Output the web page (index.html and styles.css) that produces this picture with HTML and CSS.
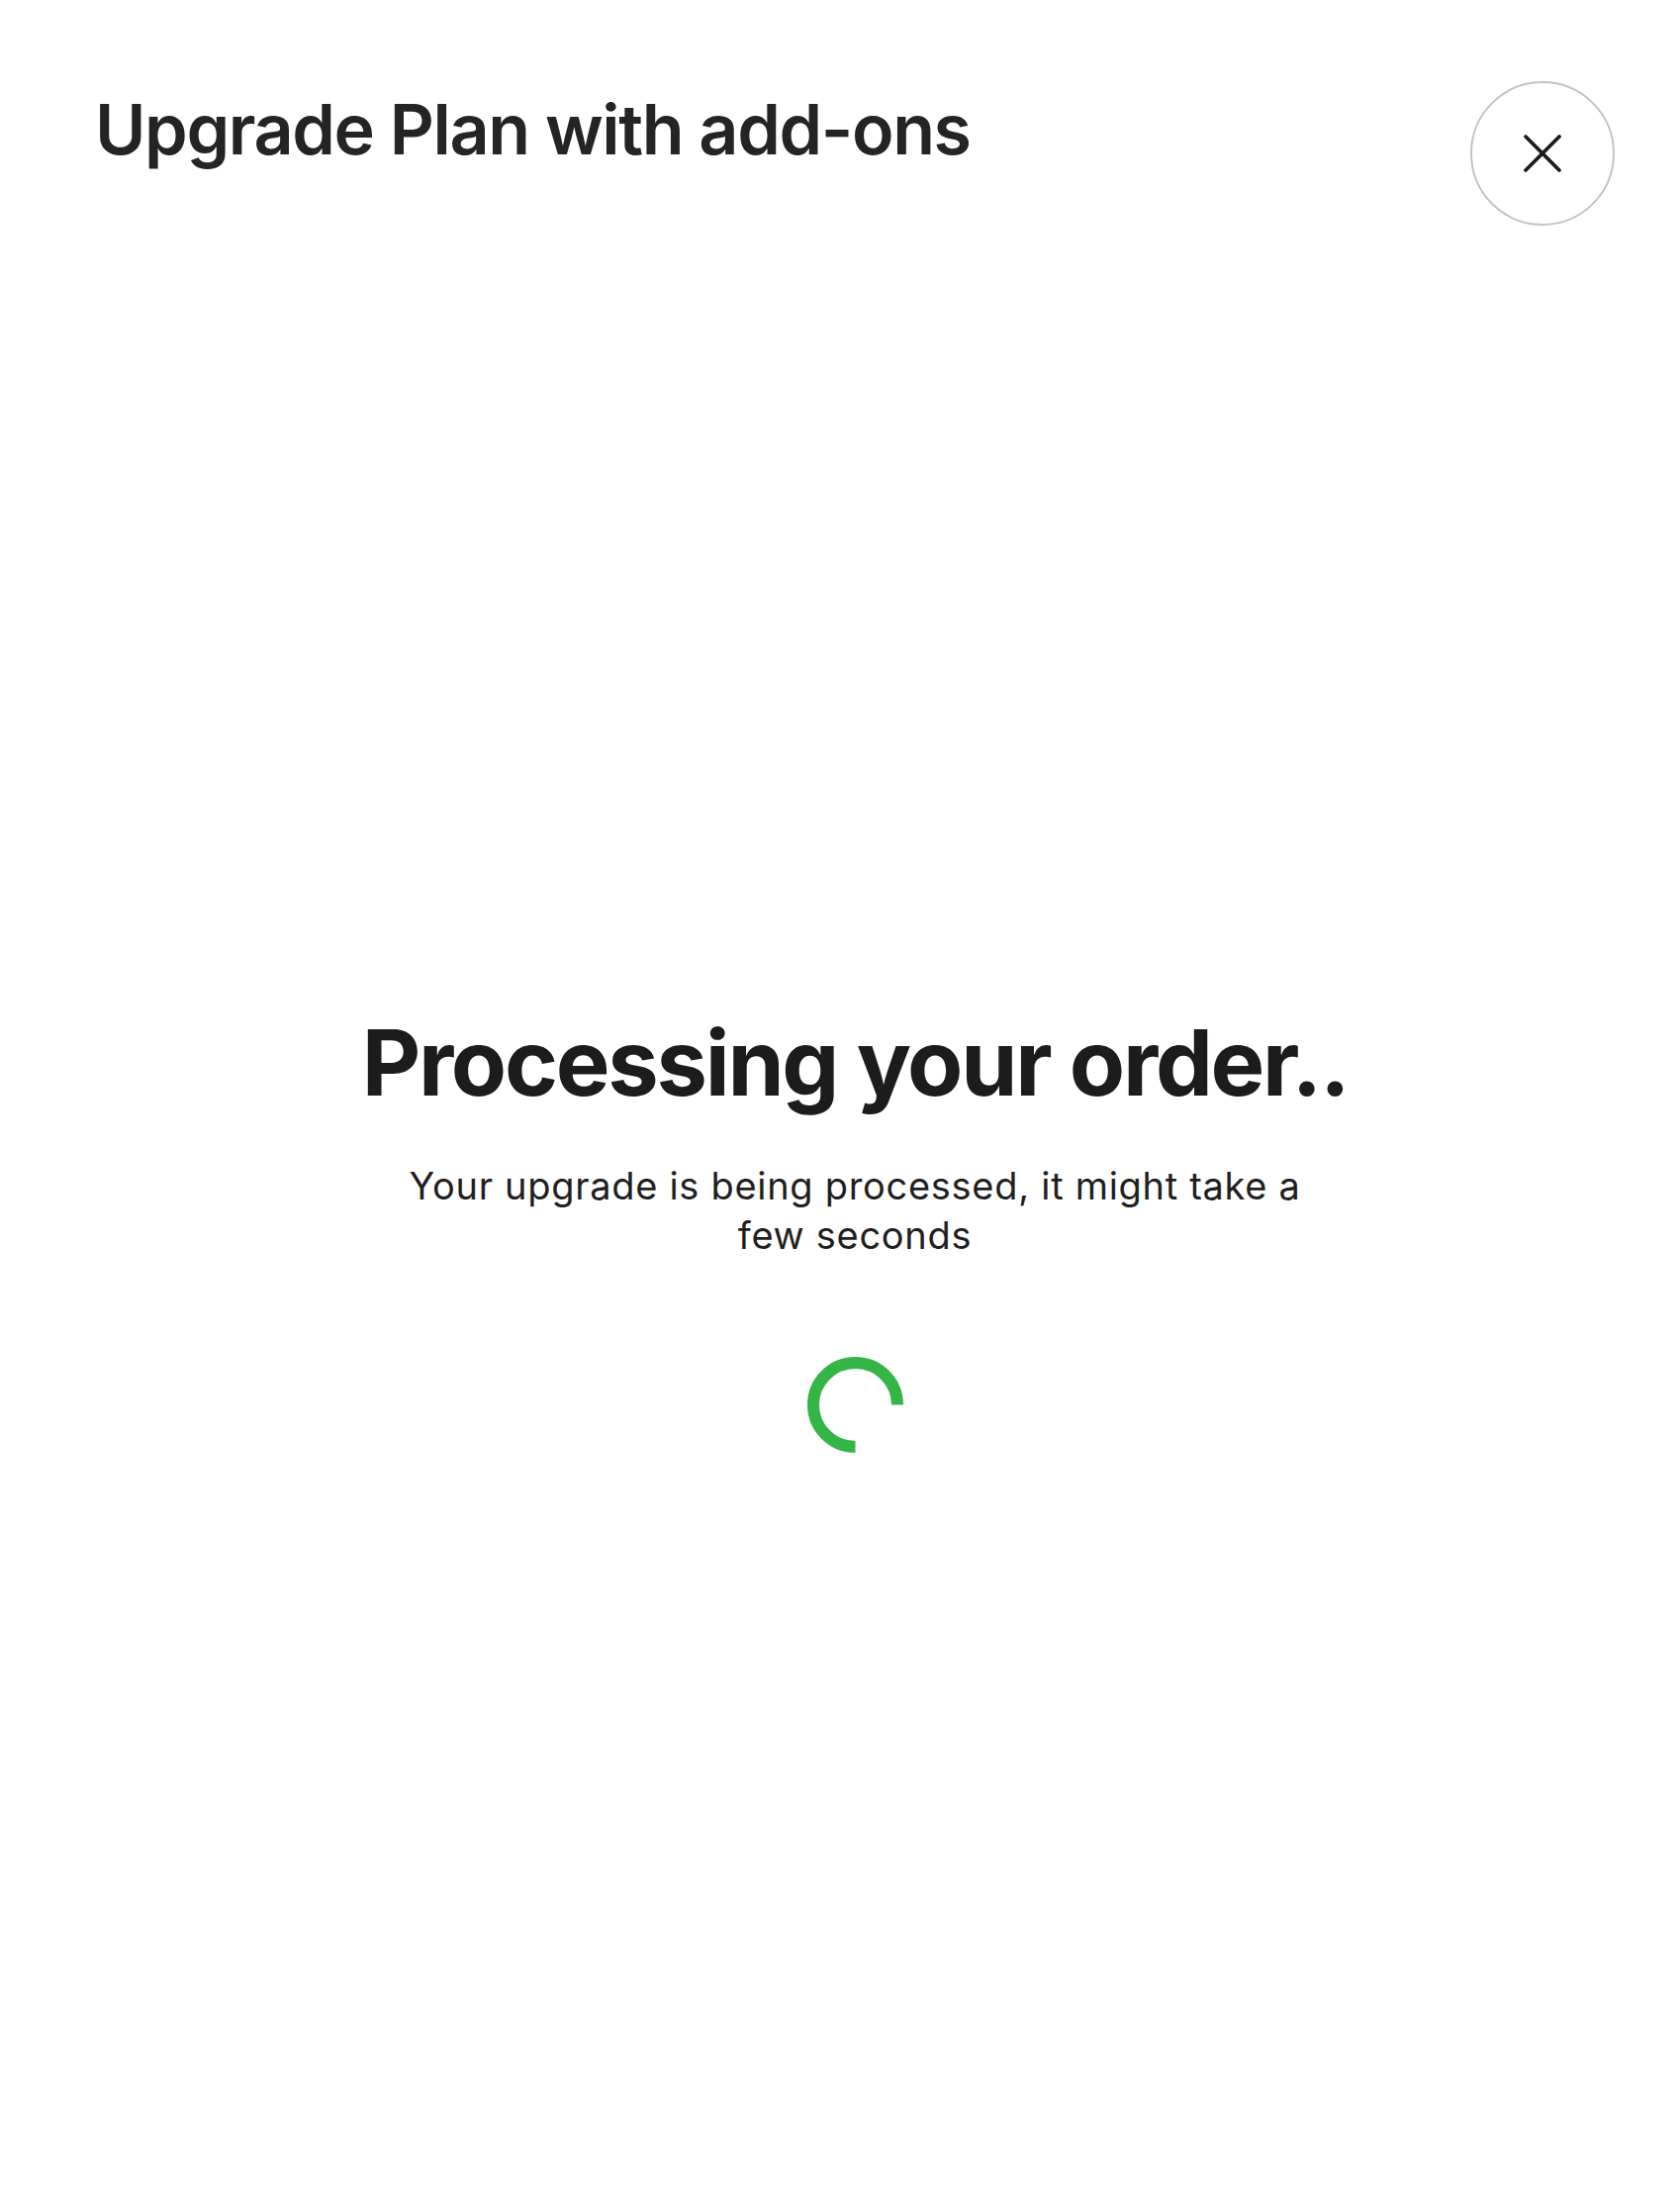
FILE: index.html
```html
<!DOCTYPE html>
<html lang="en">
<head>
<meta charset="utf-8">
<title>Upgrade Plan with add-ons</title>
<link rel="stylesheet" href="styles.css">
</head>
<body>
<div class="page">
  <header class="header">
    <h1 class="title">Upgrade Plan with add-ons</h1>
    <button class="close" aria-label="Close">
      <svg width="40" height="40" viewBox="0 0 40 40" aria-hidden="true">
        <path d="M3 3 L37 37 M37 3 L3 37" stroke="#1c1c1c" stroke-width="3.8" stroke-linecap="round" fill="none"/>
      </svg>
    </button>
  </header>
  <main class="status">
    <h2 class="status-title">Processing your order..</h2>
    <p class="status-text">Your upgrade is being processed, it might take a few seconds</p>
    <svg class="spinner" width="97" height="97" viewBox="0 0 97 97" aria-hidden="true">
      <path d="M48.5 91 A42.5 42.5 0 1 1 91 48.5" stroke="#34b546" stroke-width="12" fill="none"/>
    </svg>
  </main>
</div>
</body>
</html>
```
FILE: styles.css
```css
html, body {
  margin: 0;
  padding: 0;
  background: #ffffff;
}
body {
  font-family: Inter, "Noto Sans", "Liberation Sans", sans-serif;
  color: #222222;
}
.page {
  padding: 0 66px 0 96px;
  min-height: 2226px;
  box-sizing: border-box;
}
.header {
  display: flex;
  justify-content: space-between;
  align-items: flex-start;
  padding-top: 82px;
}
.title {
  margin: 7px 0 0 0;
  font-size: 70px;
  line-height: 84px;
  font-weight: 600;
  letter-spacing: -1.4px;
  color: #242424;
}
.close {
  width: 146px;
  height: 146px;
  border-radius: 50%;
  border: 2px solid #c4c4c4;
  background: #ffffff;
  display: flex;
  align-items: center;
  justify-content: center;
  padding: 0;
  cursor: pointer;
  box-sizing: border-box;
}
.close svg {
  width: 40px;
  height: 40px;
}
.status {
  display: flex;
  flex-direction: column;
  align-items: center;
  text-align: center;
  margin-top: 795px;
}
.status-title {
  margin: 0;
  font-size: 92px;
  line-height: 101px;
  font-weight: 700;
  letter-spacing: -2.3px;
  color: #1c1c1c;
}
.status-text {
  margin: 49px 0 0 0;
  max-width: 960px;
  font-size: 38px;
  line-height: 50px;
  font-weight: 400;
  letter-spacing: 0.7px;
  color: #1f1f1f;
}
.spinner {
  margin-top: 98px;
  display: block;
}
```
